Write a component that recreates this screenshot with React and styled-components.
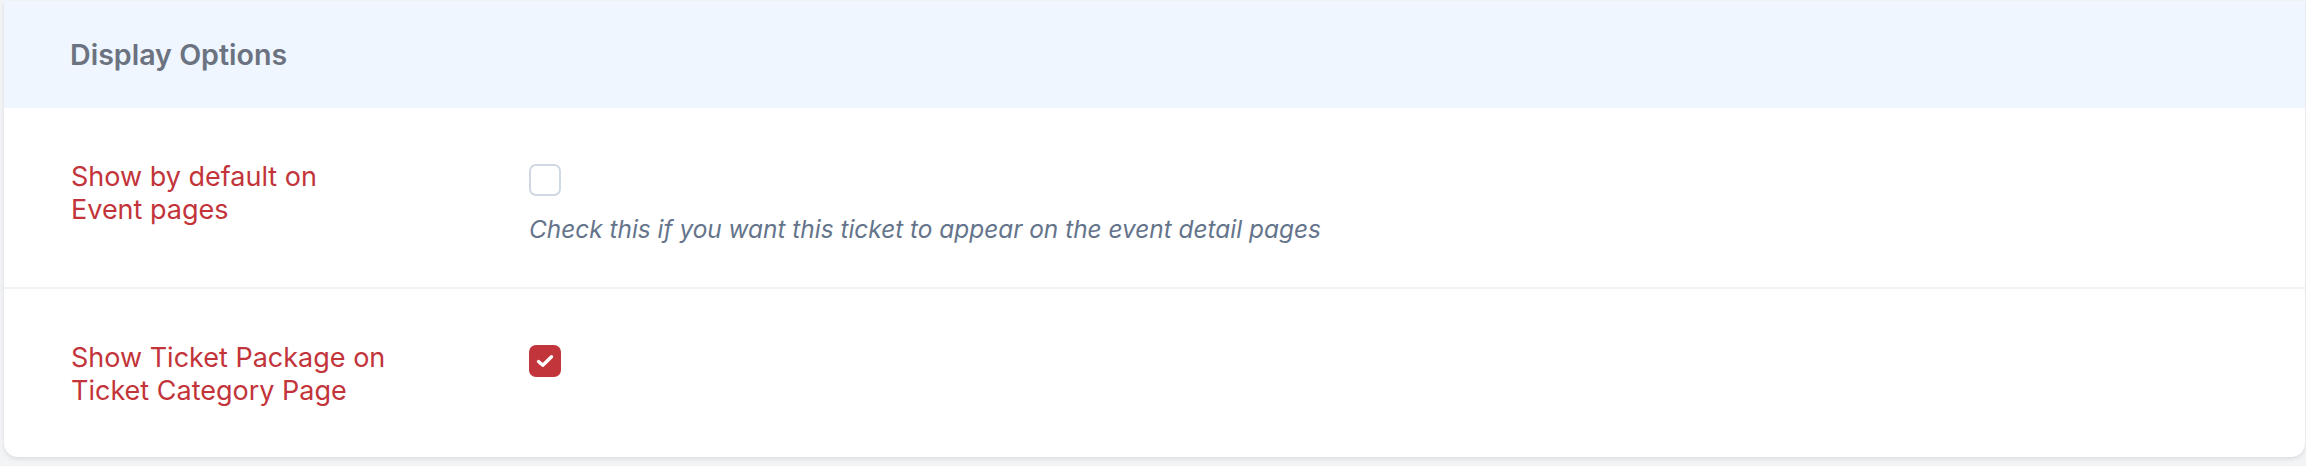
import React, { useState } from "react";
import styled, { createGlobalStyle } from "styled-components";

const GlobalStyle = createGlobalStyle`
  html, body {
    margin: 0;
    padding: 0;
    background: #f3f4f6;
    font-family: Inter, "Noto Sans", sans-serif;
  }
`;

const Page = styled.div`
  padding: 1px 1px 8px 4px;
`;

const Card = styled.section`
  background: #ffffff;
  border-radius: 0 0 14px 14px;
  box-shadow: 0 2px 4px rgba(15, 23, 42, 0.1);
  overflow: hidden;
`;

const Header = styled.div`
  height: 107px;
  display: flex;
  align-items: center;
  padding-left: 66px;
  background: #eff6ff;
`;

const Title = styled.h2`
  margin: 0;
  font-size: 28.6px;
  font-weight: 600;
  color: #6b7280;
`;

const Row = styled.div`
  display: grid;
  grid-template-columns: 458px 1fr;
  padding: 49px 0 ${(p) => p.$bottom}px 67px;
  border-top: ${(p) => (p.$divider ? "2px solid #f1f2f4" : "none")};
`;

const Label = styled.label`
  margin-top: 3px;
  font-size: 27px;
  line-height: 33px;
  color: #c2343a;
`;

const Field = styled.div`
  display: flex;
  flex-direction: column;
  align-items: flex-start;
`;

const Box = styled.button`
  width: 32px;
  height: 32px;
  margin-top: 7px;
  padding: 0;
  border-radius: 7px;
  border: 2px solid ${(p) => (p.$checked ? "#c1353b" : "#cfd8e3")};
  background: ${(p) => (p.$checked ? "#c1353b" : "#ffffff")};
  display: flex;
  align-items: center;
  justify-content: center;
  cursor: pointer;
`;

const Help = styled.p`
  margin: 18px 0 0;
  font-size: 24.4px;
  line-height: 31px;
  font-style: italic;
  color: #64748b;
`;

const Check = () => (
  <svg width="18" height="14" viewBox="0 0 18 14">
    <path
      d="M2.5 7.5 L6.8 11.2 L15.5 2.8"
      fill="none"
      stroke="#ffffff"
      strokeWidth="3.4"
      strokeLinecap="round"
      strokeLinejoin="round"
    />
  </svg>
);

const Checkbox = ({ checked, onToggle }) => (
  <Box type="button" $checked={checked} onClick={onToggle}>
    {checked && <Check />}
  </Box>
);

const App = () => {
  const [showEvent, setShowEvent] = useState(false);
  const [showCategory, setShowCategory] = useState(true);

  return (
    <>
      <GlobalStyle />
      <Page>
        <Card>
          <Header>
            <Title>Display Options</Title>
          </Header>

          <Row $bottom={42}>
            <Label>
              Show by default on
              <br />
              Event pages
            </Label>
            <Field>
              <Checkbox checked={showEvent} onToggle={() => setShowEvent(!showEvent)} />
              <Help>Check this if you want this ticket to appear on the event detail pages</Help>
            </Field>
          </Row>

          <Row $divider $bottom={50}>
            <Label>
              Show Ticket Package on
              <br />
              Ticket Category Page
            </Label>
            <Field>
              <Checkbox checked={showCategory} onToggle={() => setShowCategory(!showCategory)} />
            </Field>
          </Row>
        </Card>
      </Page>
    </>
  );
};

export default App;
